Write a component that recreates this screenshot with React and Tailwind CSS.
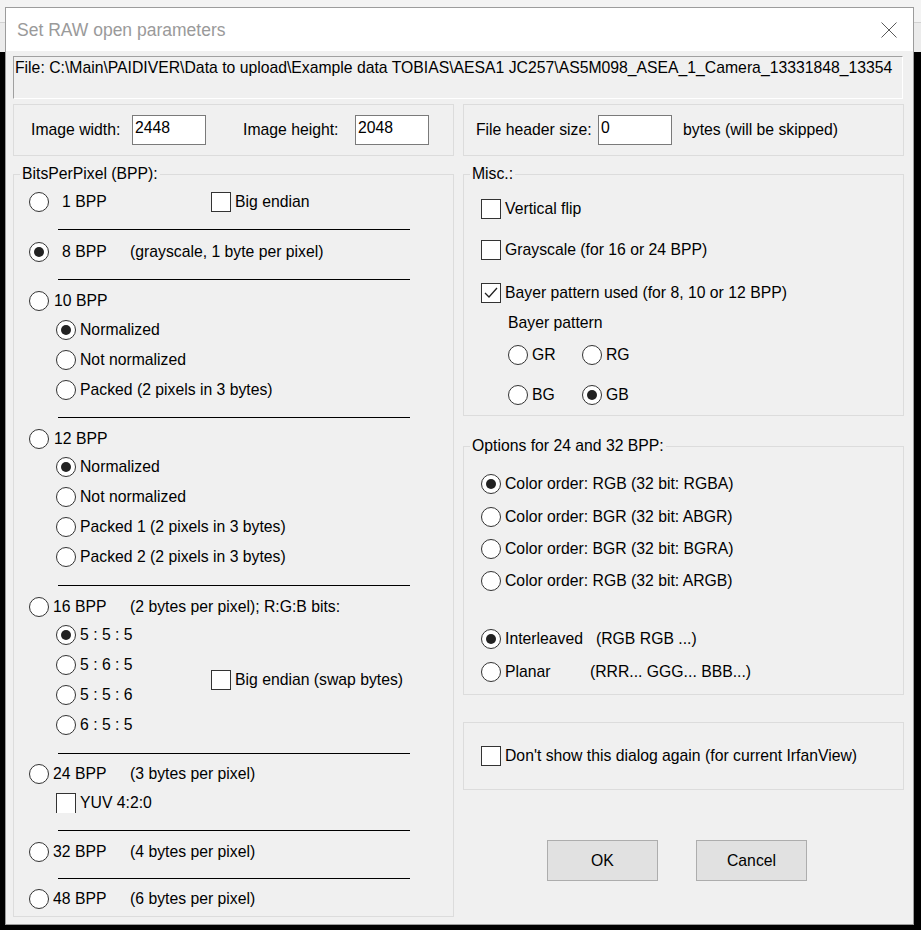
import React from "react"

const Radio = ({ checked }) => (
  <span className="flex h-[20px] w-[20px] shrink-0 items-center justify-center rounded-full border border-[#333] bg-white">
    {checked && <span className="h-[10px] w-[10px] rounded-full bg-[#222]" />}
  </span>
)

const Check = ({ checked, noBottom }) => (
  <span
    className={
      noBottom
        ? "flex h-[20px] w-[20px] shrink-0 items-start border border-b-0 border-[#333] bg-white"
        : "flex h-[20px] w-[20px] shrink-0 items-center justify-center border border-[#333] bg-white"
    }
  >
    {checked && (
      <svg width="18" height="18" viewBox="0 0 18 18">
        <polyline points="3,9 7,13 15,4" fill="none" stroke="#222" strokeWidth="1.3" />
      </svg>
    )}
  </span>
)

const Sep = ({ className }) => <div className={"ml-[29px] h-px w-[352px] bg-black " + className} />

const SubRadio = ({ checked, label, className = "" }) => (
  <div className={"ml-[27px] flex h-[20px] items-center " + className}>
    <Radio checked={checked} />
    <span className="ml-[4px] whitespace-nowrap">{label}</span>
  </div>
)

const CheckRow = ({ checked, label, className = "" }) => (
  <div className={"flex h-[20px] items-center " + className}>
    <Check checked={checked} />
    <span className="ml-[4px] whitespace-nowrap">{label}</span>
  </div>
)

const Field = ({ value }) => (
  <div className="h-[30px] w-[74px] shrink-0 border border-[#7a7a7a] bg-white pl-[2px] pt-[3px] leading-[18px]">
    {value}
  </div>
)

export default function App() {
  return (
    <div className="relative h-[930px] w-[921px] overflow-hidden bg-black font-['Liberation_Sans',Arial,sans-serif] text-[15.75px] leading-[20px] text-black">
      {/* desktop strip behind the dialog */}
      <div className="absolute left-0 top-0 w-full">
        <div className="h-[23px] border-b border-[#d2d2d2] bg-[#f3f3f3]" />
        <div className="h-[29px] bg-[#ebebeb]" />
      </div>

      <div className="absolute left-[5px] top-[7px] flex h-[918px] w-[909px] flex-col border border-[#9c9c9c] bg-[#f0f0f0]">
        {/* title bar */}
        <div className="flex h-[43px] shrink-0 items-center justify-between bg-white pl-[11px] pr-[16px]">
          <span className="text-[17.5px] text-[#9a9a9a]">Set RAW open parameters</span>
          <svg width="16" height="16" viewBox="0 0 16 16">
            <path d="M0.5 0.5 L15.5 15.5 M15.5 0.5 L0.5 15.5" stroke="#5a5a5a" strokeWidth="1" fill="none" />
          </svg>
        </div>

        <div className="flex flex-col pl-[7px]">
          {/* file path */}
          <div className="mt-[5px] h-[43px] w-[890px] overflow-hidden whitespace-nowrap border border-b-white border-l-[#a0a0a0] border-r-white border-t-[#a0a0a0] pl-[1px] pt-[2px] leading-[18px]">
            File: C:\Main\PAIDIVER\Data to upload\Example data TOBIAS\AESA1 JC257\AS5M098_ASEA_1_Camera_13331848_13354
          </div>

          <div className="mt-[5px] flex gap-[9px]">
            {/* left column */}
            <div className="flex w-[441px] flex-col">
              <div className="flex h-[52px] items-center border border-[#dcdcdc] pl-[17px]">
                <span className="w-[101px]">Image width:</span>
                <Field value="2448" />
                <span className="ml-[37px] w-[112px]">Image height:</span>
                <Field value="2048" />
              </div>

              <fieldset className="mt-[9px] h-[752px] border border-[#dcdcdc]">
                <legend className="ml-[6px] px-[2px] leading-[18px]">BitsPerPixel (BPP):</legend>
                <div className="flex flex-col pl-[15px]">
                  <div className="mt-[9px] flex h-[20px] items-center">
                    <Radio />
                    <span className="w-[162px] pl-[13px]">1 BPP</span>
                    <Check />
                    <span className="ml-[4px]">Big endian</span>
                  </div>
                  <Sep className="mt-[17px]" />
                  <div className="mt-[12px] flex h-[20px] items-center">
                    <Radio checked />
                    <span className="w-[81px] pl-[13px]">8 BPP</span>
                    <span>(grayscale, 1 byte per pixel)</span>
                  </div>
                  <Sep className="mt-[17px]" />
                  <div className="mt-[11px] flex h-[20px] items-center">
                    <Radio />
                    <span className="pl-[5px]">10 BPP</span>
                  </div>
                  <SubRadio className="mt-[9px]" checked label="Normalized" />
                  <SubRadio className="mt-[10px]" label="Not normalized" />
                  <SubRadio className="mt-[10px]" label="Packed (2 pixels in 3 bytes)" />
                  <Sep className="mt-[17px]" />
                  <div className="mt-[11px] flex h-[20px] items-center">
                    <Radio />
                    <span className="pl-[5px]">12 BPP</span>
                  </div>
                  <SubRadio className="mt-[8px]" checked label="Normalized" />
                  <SubRadio className="mt-[10px]" label="Not normalized" />
                  <SubRadio className="mt-[10px]" label="Packed 1 (2 pixels in 3 bytes)" />
                  <SubRadio className="mt-[10px]" label="Packed 2 (2 pixels in 3 bytes)" />
                  <Sep className="mt-[18px]" />
                  <div className="mt-[11px] flex h-[20px] items-center">
                    <Radio />
                    <span className="w-[81px] pl-[4px]">16 BPP</span>
                    <span>(2 bytes per pixel); R:G:B bits:</span>
                  </div>
                  <div className="mt-[8px] flex items-center">
                    <div className="flex w-[182px] flex-col">
                      <SubRadio checked label="5 : 5 : 5" />
                      <SubRadio className="mt-[10px]" label="5 : 6 : 5" />
                      <SubRadio className="mt-[10px]" label="5 : 5 : 6" />
                      <SubRadio className="mt-[10px]" label="6 : 5 : 5" />
                    </div>
                    <CheckRow label="Big endian (swap bytes)" />
                  </div>
                  <Sep className="mt-[18px]" />
                  <div className="mt-[10px] flex h-[20px] items-center">
                    <Radio />
                    <span className="w-[81px] pl-[4px]">24 BPP</span>
                    <span>(3 bytes per pixel)</span>
                  </div>
                  <div className="ml-[27px] mt-[9px] flex h-[20px] items-center">
                    <Check noBottom />
                    <span className="ml-[4px]">YUV 4:2:0</span>
                  </div>
                  <Sep className="mt-[17px]" />
                  <div className="mt-[11px] flex h-[20px] items-center">
                    <Radio />
                    <span className="w-[81px] pl-[4px]">32 BPP</span>
                    <span>(4 bytes per pixel)</span>
                  </div>
                  <Sep className="mt-[16px]" />
                  <div className="mt-[10px] flex h-[20px] items-center">
                    <Radio />
                    <span className="w-[81px] pl-[4px]">48 BPP</span>
                    <span>(6 bytes per pixel)</span>
                  </div>
                </div>
              </fieldset>
            </div>

            {/* right column */}
            <div className="flex w-[441px] flex-col">
              <div className="flex h-[52px] items-center border border-[#dcdcdc] pl-[12px]">
                <span className="w-[122px]">File header size:</span>
                <Field value="0" />
                <span className="ml-[11px]">bytes (will be skipped)</span>
              </div>

              <fieldset className="mt-[9px] h-[251px] border border-[#dcdcdc]">
                <legend className="ml-[6px] px-[2px] leading-[18px]">Misc.:</legend>
                <div className="flex flex-col pl-[17px]">
                  <CheckRow className="mt-[16px]" label="Vertical flip" />
                  <CheckRow className="mt-[21px]" label="Grayscale (for 16 or 24 BPP)" />
                  <CheckRow className="mt-[23px]" checked label="Bayer pattern used (for 8, 10 or 12 BPP)" />
                  <div className="ml-[27px] mt-[11px] h-[18px] leading-[18px]">Bayer pattern</div>
                  <div className="ml-[27px] mt-[13px] flex">
                    <div className="flex h-[20px] w-[74px] items-center">
                      <Radio />
                      <span className="ml-[4px]">GR</span>
                    </div>
                    <div className="flex h-[20px] items-center">
                      <Radio />
                      <span className="ml-[4px]">RG</span>
                    </div>
                  </div>
                  <div className="ml-[27px] mt-[20px] flex">
                    <div className="flex h-[20px] w-[74px] items-center">
                      <Radio />
                      <span className="ml-[4px]">BG</span>
                    </div>
                    <div className="flex h-[20px] items-center">
                      <Radio checked />
                      <span className="ml-[4px]">GB</span>
                    </div>
                  </div>
                </div>
              </fieldset>

              <fieldset className="mt-[21px] h-[258px] border border-[#dcdcdc]">
                <legend className="ml-[6px] px-[2px] leading-[18px]">Options for 24 and 32 BPP:</legend>
                <div className="flex flex-col pl-[17px]">
                  <div className="mt-[19px] flex h-[20px] items-center">
                    <Radio checked />
                    <span className="ml-[4px]">Color order: RGB (32 bit: RGBA)</span>
                  </div>
                  <div className="mt-[13px] flex h-[20px] items-center">
                    <Radio />
                    <span className="ml-[4px]">Color order: BGR (32 bit: ABGR)</span>
                  </div>
                  <div className="mt-[12px] flex h-[20px] items-center">
                    <Radio />
                    <span className="ml-[4px]">Color order: BGR (32 bit: BGRA)</span>
                  </div>
                  <div className="mt-[12px] flex h-[20px] items-center">
                    <Radio />
                    <span className="ml-[4px]">Color order: RGB (32 bit: ARGB)</span>
                  </div>
                  <div className="mt-[38px] flex h-[20px] items-center">
                    <Radio checked />
                    <span className="ml-[4px] w-[91px]">Interleaved</span>
                    <span>(RGB RGB ...)</span>
                  </div>
                  <div className="mt-[13px] flex h-[20px] items-center">
                    <Radio />
                    <span className="ml-[4px] w-[85px]">Planar</span>
                    <span>(RRR... GGG... BBB...)</span>
                  </div>
                </div>
              </fieldset>

              <div className="mt-[27px] flex h-[68px] items-center border border-[#dcdcdc] pl-[17px]">
                <CheckRow label="Don't show this dialog again (for current IrfanView)" />
              </div>

              <div className="ml-[84px] mt-[50px] flex gap-[38px]">
                <button className="h-[41px] w-[111px] border border-[#adadad] bg-[#e1e1e1]">OK</button>
                <button className="h-[41px] w-[111px] border border-[#adadad] bg-[#e1e1e1]">Cancel</button>
              </div>
            </div>
          </div>
        </div>
      </div>
    </div>
  )
}
